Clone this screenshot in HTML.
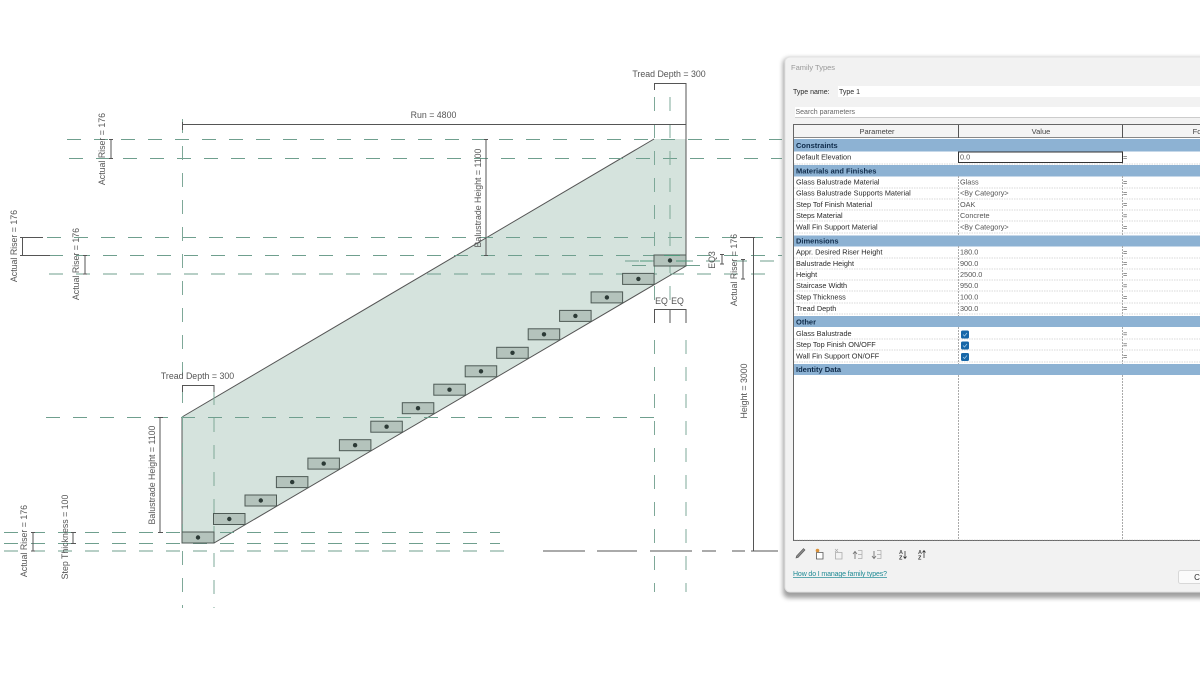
<!DOCTYPE html>
<html><head><meta charset="utf-8"><style>
html,body{margin:0;padding:0;background:#fff;width:1200px;height:675px;overflow:hidden}
svg{display:block;font-family:"Liberation Sans",sans-serif;filter:blur(.3px)}
.d{stroke:#6f9f8e;stroke-width:1;fill:none;stroke-dasharray:14 13}
.v{stroke:#7ea898;stroke-width:1;fill:none;stroke-dasharray:14 13}
.k{stroke:#555;stroke-width:1;fill:none}
.t{font-size:8.8px;fill:#555}
.p{font-size:7.3px;fill:#2a2a2a}
.s{font-size:7.5px;font-weight:bold;fill:#0f2b4a}
.st{fill:#b4c3bc;stroke:#4e5a55;stroke-width:1}
.r{stroke:#b5b5b5;stroke-width:.6;stroke-dasharray:1.5 1;fill:none}
</style></head><body>
<svg width="1200" height="675" viewBox="0 0 1200 675" xmlns="http://www.w3.org/2000/svg">
<rect width="1200" height="675" fill="#fff"/>
<polygon points="182,417 654,139 686,139 686,266 214,543 182,543" fill="#d5e3dd"/>
<path d="M182,417 654,139M686,266 214,543H182V417" class="k" stroke-width=".8"/>

<g class="d">
<path d="M67,139.500H782"/>
<path d="M69,158.500H782"/>
<path d="M47,237.500H782"/>
<path d="M49,255.500H782"/>
<path d="M49,274H770"/>
<path d="M46,417.500H655"/>
<path d="M4,532.500H500"/>
<path d="M4,543.500H500"/>
<path d="M4,551H516"/>
<path d="M625,261H780"/>
<path d="M632,265.500H700"/>
</g>
<g class="v">
<path d="M182.500,119V608"/>
<path d="M214,391V608"/>
<path d="M654.500,97V300"/>
<path d="M670,97V300"/>
<path d="M686,529V592"/>
<path d="M654.500,340V592"/>
<path d="M686,340V525"/>
</g>
<path d="M543,551H585M597,551H637M650,551H692M702,551H716M732,551H745M753,551H778" stroke="#555" stroke-width="1" fill="none"/>

<g class="st">
<rect x="182" y="532" width="32" height="11"/>
<rect x="213.500" y="513.500" width="31.500" height="11"/>
<rect x="245" y="495" width="31.500" height="11"/>
<rect x="276.400" y="476.600" width="31.500" height="11"/>
<rect x="307.900" y="458.100" width="31.500" height="11"/>
<rect x="339.400" y="439.700" width="31.500" height="11"/>
<rect x="370.800" y="421.200" width="31.500" height="11"/>
<rect x="402.300" y="402.700" width="31.500" height="11"/>
<rect x="433.800" y="384.200" width="31.500" height="11"/>
<rect x="465.200" y="365.800" width="31.500" height="11"/>
<rect x="496.700" y="347.300" width="31.500" height="11"/>
<rect x="528.200" y="328.800" width="31.500" height="11"/>
<rect x="559.600" y="310.400" width="31.500" height="11"/>
<rect x="591.100" y="291.900" width="31.500" height="11"/>
<rect x="622.600" y="273.400" width="31.500" height="11"/>
<rect x="654" y="255" width="32" height="11"/>
</g>
<g fill="#2c3a36">
<circle cx="198" cy="537.500" r="2.200"/>
<circle cx="229.300" cy="519" r="2.200"/>
<circle cx="260.800" cy="500.500" r="2.200"/>
<circle cx="292.200" cy="482.100" r="2.200"/>
<circle cx="323.700" cy="463.600" r="2.200"/>
<circle cx="355.100" cy="445.200" r="2.200"/>
<circle cx="386.600" cy="426.700" r="2.200"/>
<circle cx="418" cy="408.200" r="2.200"/>
<circle cx="449.500" cy="389.700" r="2.200"/>
<circle cx="481" cy="371.300" r="2.200"/>
<circle cx="512.500" cy="352.800" r="2.200"/>
<circle cx="544" cy="334.300" r="2.200"/>
<circle cx="575.400" cy="315.900" r="2.200"/>
<circle cx="606.900" cy="297.400" r="2.200"/>
<circle cx="638.400" cy="278.900" r="2.200"/>
<circle cx="670" cy="260.500" r="2.200"/>
</g>
<path d="M640,261H652M676,261H690M664,255.500H680" stroke="#4e9a7c" stroke-width="1" fill="none"/>

<g class="k">
<path d="M182,124.500H686M686,83V255M654,83.500H686M654.500,83V90"/>
<path d="M182.500,122V130"/>
<path d="M486,139V255M484,139.500H488M484,255.500H488"/>
<path d="M160,417V532M158,417.500H163M158,532.500H163"/>
<path d="M182,385.500H214M182.500,385V392M214,385V392"/>
<path d="M111,139V158M109,139.500H113M109,158.500H113"/>
<path d="M22.500,237V255M20,237.500H43M20,255.500H50"/>
<path d="M85,255V274M83,255.500H87M83,274H87"/>
<path d="M33,532V551M31,532.500H35M31,551H35"/>
<path d="M73,532V543M71,532.500H76M71,543.500H76"/>
<path d="M753.500,237V551M740,237.500H755M751,551H755"/>
<path d="M743,259V279M741,259.500H745M741,279H745"/>
<path d="M722,254V264M720,254.500H724M720,264H724"/>
<path d="M654,309.500H686M654.500,309V323M670,309V323M686,309V323"/>
</g>

<g class="t">
<text x="433.500" y="118" text-anchor="middle">Run = 4800</text>
<text x="669" y="77" text-anchor="middle">Tread Depth = 300</text>
<text x="197.500" y="379" text-anchor="middle">Tread Depth = 300</text>
<text x="661.500" y="304" text-anchor="middle">EQ</text>
<text x="677.500" y="304" text-anchor="middle">EQ</text>
<text transform="translate(481,198) rotate(-90)" text-anchor="middle">Balustrade Height = 1100</text>
<text transform="translate(155,475) rotate(-90)" text-anchor="middle">Balustrade Height = 1100</text>
<text transform="translate(105,149) rotate(-90)" text-anchor="middle">Actual Riser = 176</text>
<text transform="translate(17,246) rotate(-90)" text-anchor="middle">Actual Riser = 176</text>
<text transform="translate(79,264) rotate(-90)" text-anchor="middle">Actual Riser = 176</text>
<text transform="translate(27,541) rotate(-90)" text-anchor="middle">Actual Riser = 176</text>
<text transform="translate(68,537) rotate(-90)" text-anchor="middle">Step Thickness = 100</text>
<text transform="translate(737,270) rotate(-90)" text-anchor="middle">Actual Riser = 176</text>
<text transform="translate(747,391) rotate(-90)" text-anchor="middle">Height = 3000</text>
<text transform="translate(715,260) rotate(-90)" text-anchor="middle">EQ3</text>
</g>

<defs><filter id="sh" x="-10%" y="-10%" width="120%" height="120%"><feGaussianBlur stdDeviation="2.500"/></filter></defs>
<rect x="783" y="58" width="430" height="540" rx="6" fill="#777" filter="url(#sh)" opacity=".7"/>
<rect x="785" y="57" width="425" height="535" rx="5" fill="#f2f2f2" stroke="#e2e2e2"/>
<text x="791" y="70" font-size="7.500" fill="#999">Family Types</text>
<text x="793" y="94" class="p" style="font-size:7px">Type name:</text>
<rect x="838" y="86" width="362" height="11" fill="#fff"/>
<text x="839" y="94" class="p" style="font-size:7px">Type 1</text>
<rect x="795" y="107" width="405" height="10" fill="#fff"/>
<path d="M795,117.500H1200" stroke="#ccc"/>
<text x="795.500" y="114" class="p" style="font-size:7px;fill:#666">Search parameters</text>

<rect x="793.500" y="124.500" width="410" height="416" fill="#fff" stroke="#666"/>
<rect x="794" y="125" width="406" height="12.500" fill="#f4f4f4"/>
<path d="M794,137.500H1200" stroke="#888"/>
<rect x="794" y="139" width="406" height="12.500" fill="#8db2d3"/>
<rect x="794" y="165" width="406" height="11.500" fill="#8db2d3"/>
<rect x="794" y="235.500" width="406" height="11" fill="#8db2d3"/>
<rect x="794" y="316" width="406" height="11" fill="#8db2d3"/>
<rect x="794" y="364" width="406" height="11" fill="#8db2d3"/>
<path d="M958.500,125V138M1122.500,125V138" stroke="#555"/>
<path d="M958.500,176V235M1122.500,176V235M958.500,246V316M1122.500,246V316M958.500,327V364M1122.500,327V364M958.500,375V540M1122.500,375V540M1122.500,151V164" stroke="#aaa" stroke-dasharray="2 1" fill="none"/>
<g class="r">
<path d="M794,164H1200"/>
<path d="M794,188H1200"/><path d="M794,199H1200"/><path d="M794,210H1200"/><path d="M794,221H1200"/><path d="M794,233H1200"/>
<path d="M794,258H1200"/><path d="M794,269H1200"/><path d="M794,280H1200"/><path d="M794,291H1200"/><path d="M794,303H1200"/><path d="M794,314H1200"/>
<path d="M794,339H1200"/><path d="M794,350H1200"/><path d="M794,362H1200"/>
<path d="M794,540H1200"/>
</g>
<rect x="958.500" y="152" width="164" height="10.500" fill="#fff" stroke="#333"/>

<g fill="#444" text-anchor="middle" font-size="7.500">
<text x="877" y="134">Parameter</text>
<text x="1041" y="134">Value</text>
<text x="1197" y="134">Fo</text>
</g>

<g class="s">
<text x="796" y="148">Constraints</text>
<text x="796" y="173.500">Materials and Finishes</text>
<text x="796" y="243.500">Dimensions</text>
<text x="796" y="324.500">Other</text>
<text x="796" y="372">Identity Data</text>
</g>
<g class="p">
<text x="796" y="159.500">Default Elevation</text>
<text x="796" y="184.500">Glass Balustrade Material</text>
<text x="796" y="195.500">Glass Balustrade Supports Material</text>
<text x="796" y="207">Step Tof Finish Material</text>
<text x="796" y="218">Steps Material</text>
<text x="796" y="229.500">Wall Fin Support Material</text>
<text x="796" y="254.500">Appr. Desired Riser Height</text>
<text x="796" y="266">Balustrade Height</text>
<text x="796" y="277">Height</text>
<text x="796" y="288">Staircase Width</text>
<text x="796" y="299.500">Step Thickness</text>
<text x="796" y="311">Tread Depth</text>
<text x="796" y="336">Glass Balustrade</text>
<text x="796" y="347">Step Top Finish ON/OFF</text>
<text x="796" y="358.500">Wall Fin Support ON/OFF</text>
</g>
<g class="p" style="fill:#555">
<text x="960" y="159.500">0.0</text>
<text x="960" y="184.500">Glass</text>
<text x="960" y="195.500">&lt;By Category&gt;</text>
<text x="960" y="207">OAK</text>
<text x="960" y="218">Concrete</text>
<text x="960" y="229.500">&lt;By Category&gt;</text>
<text x="960" y="254.500">180.0</text>
<text x="960" y="266">900.0</text>
<text x="960" y="277">2500.0</text>
<text x="960" y="288">950.0</text>
<text x="960" y="299.500">100.0</text>
<text x="960" y="311">300.0</text>
</g>
<g class="p" style="fill:#555">
<text x="1123" y="160">=</text>
<text x="1123" y="185">=</text><text x="1123" y="196">=</text><text x="1123" y="207">=</text><text x="1123" y="218.500">=</text><text x="1123" y="230">=</text>
<text x="1123" y="255">=</text><text x="1123" y="266">=</text><text x="1123" y="277">=</text><text x="1123" y="288.500">=</text><text x="1123" y="300">=</text><text x="1123" y="311">=</text>
<text x="1123" y="336.500">=</text><text x="1123" y="347.500">=</text><text x="1123" y="359">=</text>
</g>
<g fill="#1767a8">
<rect x="961" y="330.500" width="8" height="8" rx="1.500"/>
<rect x="961" y="341.500" width="8" height="8" rx="1.500"/>
<rect x="961" y="353" width="8" height="8" rx="1.500"/>
</g>
<path d="M963,334.500l1.500,1.500 2.500,-3M963,345.500l1.500,1.500 2.500,-3M963,357l1.500,1.500 2.500,-3" stroke="#9cc6e6" stroke-width=".8" fill="none"/>

<path d="M796,558l2,-.5 7,-7.500-1.500,-1.500-7,7.500z" fill="#8a8a8a" stroke="#555" stroke-width=".6"/>
<path d="M816.500,552.500h6.500v6.500h-6.500z" fill="#fff" stroke="#555" stroke-width=".8"/>
<circle cx="817.500" cy="550.500" r="1.800" fill="#d9913a"/>
<path d="M835.500,552.500h6.500v6.500h-6.500z" fill="none" stroke="#aaa" stroke-width=".8"/>
<path d="M835,549l3,3M838,549l-3,3" stroke="#aaa" stroke-width=".7"/>
<path d="M855,559v-7M853,554l2,-2.500 2,2.500" stroke="#777" stroke-width=".9" fill="none"/>
<path d="M858,550.500h4v8h-4M858,554.500h4" stroke="#aaa" stroke-width=".7" fill="none"/>
<path d="M874,551v7M872,556l2,2.500 2,-2.500" stroke="#777" stroke-width=".9" fill="none"/>
<path d="M877,550.500h4v8h-4M877,554.500h4" stroke="#aaa" stroke-width=".7" fill="none"/>
<text x="899" y="554" font-size="5.500" font-weight="bold" fill="#555">A</text>
<text x="899" y="559.500" font-size="5.500" font-weight="bold" fill="#333">Z</text>
<path d="M905,551v7M903.500,556.500l1.500,2 1.500,-2" stroke="#333" stroke-width=".8" fill="none"/>
<text x="918" y="554" font-size="5.500" font-weight="bold" fill="#555">A</text>
<text x="918" y="559.500" font-size="5.500" font-weight="bold" fill="#333">Z</text>
<path d="M924,558v-7M922.500,552.500l1.500,-2 1.500,2" stroke="#333" stroke-width=".8" fill="none"/>

<text x="793" y="576" font-size="7" fill="#1f8a94" text-decoration="underline" textLength="94">How do I manage family types?</text>
<rect x="1178.500" y="570.500" width="30" height="13" rx="2" fill="#fbfbfb" stroke="#d8d8d8"/>
<text x="1197" y="580" class="p" text-anchor="middle" style="font-size:8px">C</text>
</svg>
</body></html>
